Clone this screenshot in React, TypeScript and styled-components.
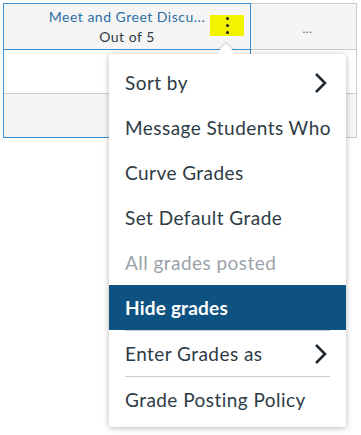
import styled, { createGlobalStyle } from "styled-components";

const Global = createGlobalStyle`
  body {
    margin: 0;
    background: #ffffff;
    font-family: Lato, "Liberation Sans", sans-serif;
    color: #2d3b45;
  }
`;

const Page = styled.div`
  position: relative;
  width: 361px;
  height: 435px;
  padding: 3px 0 0 3px;
  box-sizing: border-box;
  overflow: hidden;
`;

const Table = styled.div`
  display: flex;
`;

const Column = styled.div<{ $active?: boolean }>`
  display: flex;
  flex-direction: column;
  width: ${(p) => (p.$active ? "248px" : "106px")};
  border: 1px solid ${(p) => (p.$active ? "#3a8fd0" : "#c8cdd1")};
  border-left-width: ${(p) => (p.$active ? "1px" : "0")};
  box-sizing: border-box;
`;

const HeaderCell = styled.div<{ $active?: boolean }>`
  position: relative;
  height: 46px;
  padding-top: 1px;
  background: #f5f5f5;
  border-bottom: 1px solid ${(p) => (p.$active ? "#3a8fd0" : "#c8cdd1")};
  display: flex;
  flex-direction: column;
  align-items: center;
  justify-content: center;
  box-sizing: border-box;
`;

const Title = styled.div`
  font-size: 14px;
  line-height: 20px;
  letter-spacing: 0.5px;
  color: #2b6fa6;
  white-space: nowrap;
`;

const Subtitle = styled.div`
  font-size: 14px;
  line-height: 20px;
  letter-spacing: 0.5px;
  color: #2d3b45;
`;

const Ellipsis = styled.div`
  font-size: 12px;
  color: #5a6670;
  letter-spacing: 0.5px;
  margin: 2px 0 0 8px;
`;

const Kebab = styled.div`
  position: absolute;
  right: 6px;
  top: 11px;
  width: 34px;
  height: 21px;
  background: #f3f300;
  display: flex;
  flex-direction: column;
  align-items: center;
  justify-content: center;
  gap: 4px;
`;

const Dot = styled.span`
  width: 3px;
  height: 3px;
  border-radius: 50%;
  background: #1d1d1d;
`;

const BodyCell = styled.div<{ $shaded?: boolean; $last?: boolean }>`
  height: ${(p) => (p.$last ? "43px" : "44px")};
  background: ${(p) => (p.$shaded ? "#f5f5f5" : "#ffffff")};
  border-bottom: ${(p) => (p.$last ? "none" : "1px solid #c8cdd1")};
  box-sizing: border-box;
`;

const Menu = styled.div`
  position: absolute;
  left: 109px;
  top: 54px;
  width: 237px;
  padding: 6px 0 5px;
  background: #ffffff;
  border-radius: 2px;
  box-shadow: 0 1px 6px rgba(0, 0, 0, 0.28);
  box-sizing: border-box;

  &::before {
    content: "";
    position: absolute;
    left: 111px;
    top: -8px;
    width: 12px;
    height: 12px;
    background: #ffffff;
    transform: rotate(45deg);
    box-shadow: -1px -1px 2px rgba(0, 0, 0, 0.12);
  }
`;

const Item = styled.div<{ $disabled?: boolean; $selected?: boolean }>`
  position: relative;
  height: 45px;
  padding: 0 19px 0 16px;
  display: flex;
  align-items: center;
  justify-content: space-between;
  font-size: 19px;
  letter-spacing: ${(p) => (p.$selected ? "0.2px" : "0.45px")};
  font-weight: ${(p) => (p.$selected ? 700 : 400)};
  color: ${(p) => (p.$selected ? "#ffffff" : p.$disabled ? "#9aa3aa" : "#2d3b45")};
  background: ${(p) => (p.$selected ? "#0e5282" : "transparent")};
  white-space: nowrap;
`;

const Separator = styled.div`
  height: 1px;
  margin: 0 16px;
  background: #c8cdd1;
`;

function Chevron() {
  return (
    <svg width="14" height="22" viewBox="0 0 14 22">
      <path d="M3 2 L12 11 L3 20" fill="none" stroke="#1f2a33" strokeWidth="2.6" />
    </svg>
  );
}

export default function App() {
  return (
    <>
      <Global />
      <Page>
        <Table>
          <Column $active>
            <HeaderCell $active>
              <Title>Meet and Greet Discu...</Title>
              <Subtitle>Out of 5</Subtitle>
              <Kebab>
                <Dot />
                <Dot />
                <Dot />
              </Kebab>
            </HeaderCell>
            <BodyCell />
            <BodyCell $shaded $last />
          </Column>
          <Column>
            <HeaderCell>
              <Ellipsis>...</Ellipsis>
            </HeaderCell>
            <BodyCell />
            <BodyCell $shaded $last />
          </Column>
        </Table>
        <Menu>
          <Item>
            Sort by <Chevron />
          </Item>
          <Item>Message Students Who</Item>
          <Item>Curve Grades</Item>
          <Item>Set Default Grade</Item>
          <Item $disabled>All grades posted</Item>
          <Item $selected>Hide grades</Item>
          <Separator />
          <Item>
            Enter Grades as <Chevron />
          </Item>
          <Separator />
          <Item>Grade Posting Policy</Item>
        </Menu>
      </Page>
    </>
  );
}
